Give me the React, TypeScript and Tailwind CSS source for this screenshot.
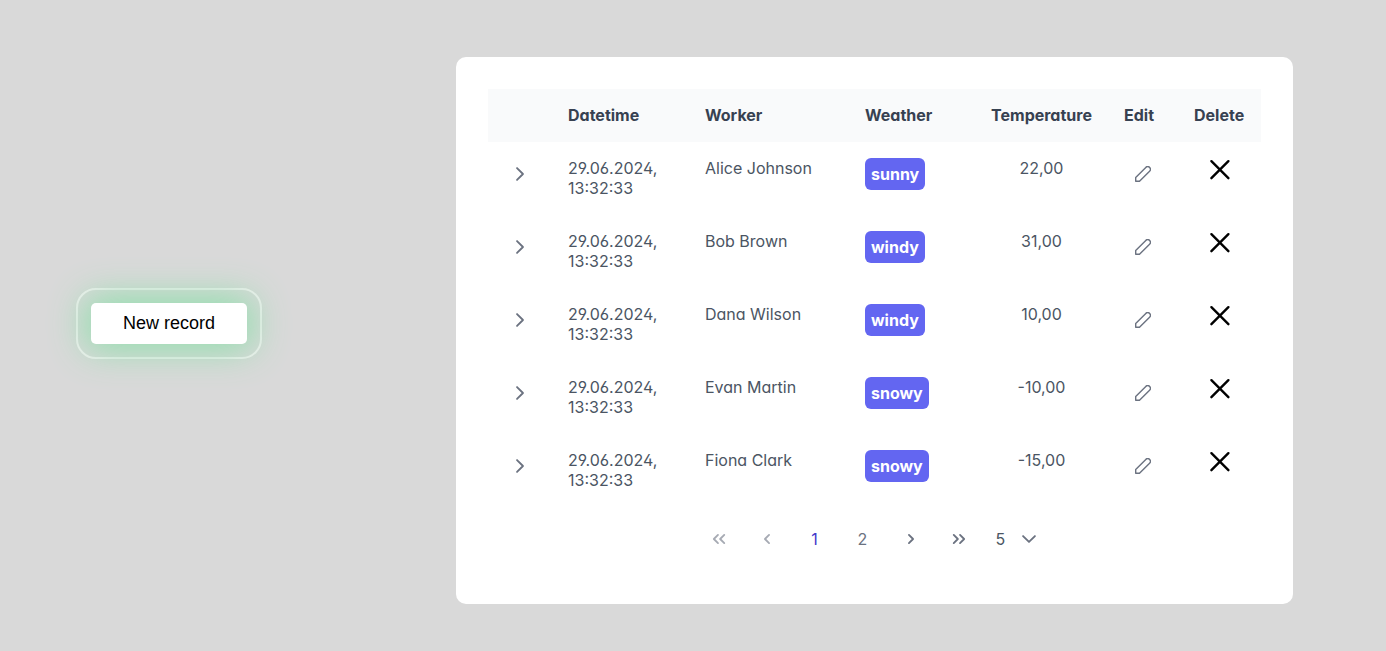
import { useState } from "react";

type Reading = { worker: string; weather: string; temperature: string };

const readings: Reading[] = [
  { worker: "Alice Johnson", weather: "sunny", temperature: "22,00" },
  { worker: "Bob Brown", weather: "windy", temperature: "31,00" },
  { worker: "Dana Wilson", weather: "windy", temperature: "10,00" },
  { worker: "Evan Martin", weather: "snowy", temperature: "-10,00" },
  { worker: "Fiona Clark", weather: "snowy", temperature: "-15,00" },
];

type StrokeIconProps = { d: string; className?: string };

function StrokeIcon({ d, className = "" }: StrokeIconProps) {
  return (
    <svg
      viewBox="0 0 14 14"
      aria-hidden="true"
      className={`size-4 ${className}`}
      fill="none"
      stroke="currentColor"
      strokeWidth="1.6"
      strokeLinecap="round"
      strokeLinejoin="round"
    >
      <path d={d} />
    </svg>
  );
}

function PencilIcon() {
  return (
    <svg viewBox="0 0 16 16" aria-hidden="true" className="size-4" fill="none" stroke="currentColor" strokeWidth="1.4" strokeLinejoin="round">
      <path d="M0.7 15.3V11.5L10.8 1.4a2.7 2.7 0 0 1 3.8 0a2.7 2.7 0 0 1 0 3.8L4.5 15.3Z" />
    </svg>
  );
}

function CrossIcon() {
  return (
    <svg viewBox="0 0 24 24" aria-hidden="true" className="size-6" fill="none" stroke="black" strokeWidth="2.4" strokeLinecap="round">
      <path d="M3.4 3.2L20.4 20.2M20.4 3.2L3.4 20.2" />
    </svg>
  );
}

const pageButton = "flex size-12 items-center justify-center rounded-full text-[#6b7280] disabled:text-[#6b7280]/60";

export default function App() {
  const [pageSize, setPageSize] = useState("5");

  return (
    <main className="flex min-h-screen items-center justify-between bg-[#d9d9d9] pr-[93px] pl-[76px] font-['Inter',sans-serif] text-base leading-5 text-[#4b5563] [font-feature-settings:'cv02','cv03','cv04','cv11']">
      <div className="pb-1">
        <div className="rounded-[20px] border-2 border-[#f4f0f2] p-[13px]">
          <button
            type="button"
            className="rounded-[5px] bg-white px-8 py-[10px] font-['Liberation_Sans',Arial,sans-serif] text-lg leading-[21px] whitespace-nowrap text-black shadow-[0_0_36px_6px_#90deac]"
          >
            New record
          </button>
        </div>
      </div>

      <div className="ml-48 max-w-[837px] grow pt-[10px]">
        <section className="rounded-[10px] bg-white px-8 pt-8 pb-[33px]">
          <table className="w-full table-fixed text-left">
            <colgroup>
              <col className="w-[64px]" />
              <col />
              <col className="w-[160px]" />
              <col className="w-[126px]" />
              <col className="w-[133px]" />
              <col className="w-[70px]" />
              <col className="w-[83px]" />
            </colgroup>
            <thead className="bg-[#f9fafb] text-[#374151]">
              <tr className="h-[53px]">
                <th aria-label="Expand" />
                <th className="px-4 pb-0.5 font-bold">Datetime</th>
                <th className="px-4 pb-0.5 font-bold">Worker</th>
                <th className="px-4 pb-0.5 font-bold">Weather</th>
                <th className="px-4 pb-0.5 text-center font-bold">Temperature</th>
                <th className="px-4 pb-0.5 font-bold">Edit</th>
                <th className="px-4 pb-0.5 font-bold">Delete</th>
              </tr>
            </thead>
            <tbody>
              {readings.map((r) => (
                <tr key={r.worker} className="h-[73px] align-top">
                  <td className="p-4">
                    <button type="button" aria-label={`Expand ${r.worker}`} className="flex size-8 items-center justify-center rounded-full text-[#6b7280]">
                      <StrokeIcon d="M4.4 1.8L9.6 7L4.4 12.2" />
                    </button>
                  </td>
                  <td className="p-4">29.06.2024, 13:32:33</td>
                  <td className="p-4">{r.worker}</td>
                  <td className="p-4">
                    <span className="inline-flex h-8 items-center rounded-md bg-[#6366f1] px-1.5 font-bold text-white">{r.weather}</span>
                  </td>
                  <td className="p-4 text-center">{r.temperature}</td>
                  <td className="py-4">
                    <button type="button" aria-label={`Edit ${r.worker}`} className="mx-auto flex size-8 items-center justify-center rounded-full text-[#6b7280]">
                      <PencilIcon />
                    </button>
                  </td>
                  <td className="py-4">
                    <button type="button" aria-label={`Delete ${r.worker}`} className="mx-auto block">
                      <CrossIcon />
                    </button>
                  </td>
                </tr>
              ))}
            </tbody>
          </table>

          <nav aria-label="Pagination" className="flex items-center justify-center py-2">
            <button type="button" disabled aria-label="First page" className={pageButton}>
              <StrokeIcon d="M6.1 3.4L2.5 7L6.1 10.6M11.6 3.4L8 7L11.6 10.6" />
            </button>
            <button type="button" disabled aria-label="Previous page" className={pageButton}>
              <StrokeIcon d="M8.8 3.4L5.2 7L8.8 10.6" />
            </button>
            <button type="button" aria-current="page" className="flex size-12 items-center justify-center rounded-full text-[#4338ca]">
              1
            </button>
            <button type="button" className={pageButton}>
              2
            </button>
            <button type="button" aria-label="Next page" className={pageButton}>
              <StrokeIcon d="M5.2 3.4L8.8 7L5.2 10.6" />
            </button>
            <button type="button" aria-label="Last page" className={pageButton}>
              <StrokeIcon d="M2.4 3.4L6 7L2.4 10.6M7.9 3.4L11.5 7L7.9 10.6" />
            </button>
            <div className="relative flex items-center">
              <select
                aria-label="Rows per page"
                value={pageSize}
                onChange={(e) => setPageSize(e.target.value)}
                className="h-12 w-[72px] appearance-none bg-transparent pl-[13px] text-[#4b5563]"
              >
                <option>5</option>
                <option>10</option>
                <option>25</option>
              </select>
              <StrokeIcon d="M1.8 4.4L7 9.6L12.2 4.4" className="pointer-events-none absolute right-[18px] text-[#6b7280]" />
            </div>
          </nav>
        </section>
      </div>
    </main>
  );
}
